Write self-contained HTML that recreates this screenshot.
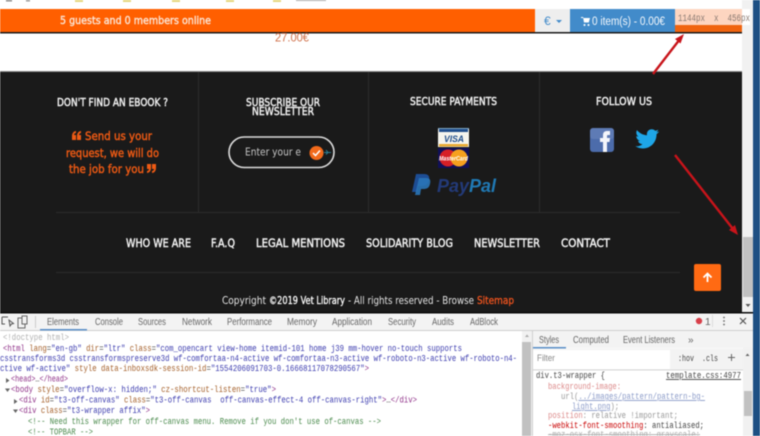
<!DOCTYPE html>
<html lang="en">
<head>
<meta charset="utf-8">
<title>Vet Library</title>
<style>
html,body{margin:0;padding:0;width:760px;height:436px;overflow:hidden;background:#fff}
svg{display:block;filter:blur(.45px)}
text{white-space:pre}
.s{font-family:"Liberation Sans",sans-serif}
.d{font-family:"DejaVu Sans",sans-serif}
.h{font-family:"DejaVu Sans",sans-serif;fill:#f1f1f1;stroke:#f1f1f1;stroke-width:.45px;font-size:10.5px}
.q{font-family:"DejaVu Sans",sans-serif;fill:#ee5a14;stroke:#ee5a14;stroke-width:.45px;font-size:11.5px}
.m{font-family:"DejaVu Sans",sans-serif;fill:#f3f3f3;stroke:#f3f3f3;stroke-width:.45px;font-size:11.5px}
.c{font-family:"DejaVu Sans",sans-serif;fill:#e4e4e4;font-size:10.5px}
.t{font-family:"Liberation Sans",sans-serif;fill:#666;font-size:10px}
.k{font-family:"Liberation Mono",monospace;font-size:9px;fill:#444}
.g{fill:#8f3088}.n{fill:#a5602a}.v{fill:#3a3aae}.x{fill:#b0b0b0}.u{fill:#4a8a4c}
</style>
</head>
<body>
<svg width="760" height="436" viewBox="0 0 760 436" xmlns="http://www.w3.org/2000/svg">
<rect width="760" height="436" fill="#fff"/>
<g fill="#e6d77c">
<rect x="75" y="0" width="8" height="2"/><rect x="123" y="0" width="8" height="2"/><rect x="172" y="0" width="8" height="2"/><rect x="226" y="0" width="8" height="2"/><rect x="273" y="0" width="8" height="2"/>
</g>
<rect x="6" y="0" width="6" height="1.500" fill="#888"/><rect x="26" y="0" width="4" height="1.500" fill="#999"/><rect x="296" y="0" width="30" height="1" fill="#aaa"/>

<rect x="742" y="0" width="11" height="312" fill="#f1f1f1"/>
<rect x="753" y="0" width="7" height="436" fill="#1d4f83"/>
<rect x="743" y="237" width="10" height="60" fill="#c1c1c1"/>
<path d="M745.500 304h5l-2.500 3z" fill="#555"/>

<rect x="0" y="9" width="742" height="23" fill="#ff5f00"/>
<rect x="0" y="32" width="742" height="1.500" fill="#1a1a1a"/>
<text class="d" x="60" y="24" font-size="10.500" fill="#fbe3d2" stroke="#fbe3d2" stroke-width=".4" textLength="151" lengthAdjust="spacingAndGlyphs">5 guests and 0 members online</text>
<rect x="535" y="9" width="35" height="23" fill="#eeeeee"/>
<text class="s" x="544" y="25" font-size="12" fill="#428bca">€</text>
<path d="M556 20h6l-3 3z" fill="#428bca"/>
<rect x="570" y="9" width="105" height="23" fill="#428bca"/>
<path d="M581 17h2l.6 1h6.400l-1.200 4.500h-4.800l-.8-4.500h-2.200zM584.500 24a1 1 0 1 0 .01 0M588.500 24a1 1 0 1 0 .01 0" fill="#fff"/>
<text class="s" x="592" y="25" font-size="11.500" fill="#f4f8fc" textLength="73" lengthAdjust="spacingAndGlyphs">0 item(s) - 0.00€</text>
<rect x="675" y="9" width="67" height="16" fill="#fdd5c0"/>
<rect x="675" y="25" width="67" height="7" fill="#f0640f"/>
<rect x="742" y="9" width="8" height="16" fill="#fff"/>
<text x="678" y="21" font-family="Liberation Mono,monospace" font-size="10" fill="#8a7a72" textLength="72" lengthAdjust="spacingAndGlyphs">1144px  x  456px</text>

<text class="s" x="275" y="41.500" font-size="11.500" fill="#d0714a" textLength="34" lengthAdjust="spacingAndGlyphs">27.00€</text>

<rect x="0" y="71" width="742" height="241" fill="#1a1a1a"/>
<rect x="0" y="71" width="742" height="1" fill="#8a8a8a"/>
<g fill="#2c2c2c">
<rect x="198" y="72" width="1" height="140"/><rect x="368" y="72" width="1" height="140"/><rect x="539" y="72" width="1" height="140"/>
<rect x="56" y="212" width="624" height="1"/><rect x="56" y="272" width="624" height="1"/>
</g>

<text class="h" x="57" y="106" textLength="111" lengthAdjust="spacingAndGlyphs">DON'T FIND AN EBOOK ?</text>
<text class="h" x="246" y="106" textLength="74" lengthAdjust="spacingAndGlyphs">SUBSCRIBE OUR</text>
<text class="h" x="252" y="115" textLength="62" lengthAdjust="spacingAndGlyphs">NEWSLETTER</text>
<text class="h" x="410" y="105" textLength="87" lengthAdjust="spacingAndGlyphs">SECURE PAYMENTS</text>
<text class="h" x="596" y="105" textLength="56" lengthAdjust="spacingAndGlyphs">FOLLOW US</text>

<path d="M72 140v-4c0-3 2-5 4-5v2c-1 0-2 1-2 2h2v5zM77 140v-4c0-3 2-5 4-5v2c-1 0-2 1-2 2h2v5z" fill="#ee5a14"/>
<text class="q" x="85" y="140" textLength="67" lengthAdjust="spacingAndGlyphs">Send us your</text>
<text class="q" x="66" y="157" textLength="93" lengthAdjust="spacingAndGlyphs">request, we will do</text>
<text class="q" x="69" y="173" textLength="75" lengthAdjust="spacingAndGlyphs">the job for you</text>
<path d="M156 164v4c0 3-2 5-4 5v-2c1 0 2-1 2-2h-2v-5zM151 164v4c0 3-2 5-4 5v-2c1 0 2-1 2-2h-2v-5z" fill="#ee5a14"/>

<rect x="229" y="137" width="105" height="30.500" rx="15.250" fill="none" stroke="#dcdcdc" stroke-width="1.600"/>
<text class="d" x="245" y="155.500" font-size="11" fill="#c4c4c4" textLength="56" lengthAdjust="spacingAndGlyphs">Enter your e</text>
<path d="M324 152.500h7M326 150l2 2.500-2 2" fill="none" stroke="#2b7f94" stroke-width="1"/>
<circle cx="316.500" cy="153" r="7" fill="#f26a1b"/>
<path d="M313 153l2.500 2.500 4.500-5" fill="none" stroke="#fff" stroke-width="1.500"/>

<rect x="438" y="128" width="31" height="19" fill="#f4f4ee"/>
<rect x="438" y="128" width="31" height="1" fill="#7fa8c8"/>
<rect x="439" y="129" width="29" height="3" fill="#1f4e8c"/>
<rect x="439" y="144" width="29" height="2.500" fill="#e8a92e"/>
<text class="s" x="444" y="142" font-size="9" font-weight="bold" font-style="italic" fill="#1f4e8c" textLength="20" lengthAdjust="spacingAndGlyphs">VISA</text>
<rect x="438" y="148" width="31" height="20" fill="#10105a"/>
<circle cx="448" cy="158" r="8.500" fill="#d61f26"/>
<circle cx="459" cy="158" r="8.500" fill="#f6a01e"/>
<text class="s" x="439" y="160.500" font-size="6.500" font-weight="bold" font-style="italic" fill="#fff" textLength="29" lengthAdjust="spacingAndGlyphs">MasterCard</text>

<path d="M416 174h8c4 0 6 2 5 6-1 4-3 6-8 6h-3l-1 6h-5z" fill="#1d4d94"/>
<path d="M419 178h7c4 0 5 2 4 6-1 4-3 5-7 5h-2l-1 6h-5z" fill="#2a76b8" opacity=".9"/>
<text class="s" x="437" y="192" font-size="18" font-weight="bold" font-style="italic" textLength="59" lengthAdjust="spacingAndGlyphs"><tspan fill="#233a78">Pay</tspan><tspan fill="#2079b4">Pal</tspan></text>

<rect x="590" y="128" width="24" height="24" rx="3" fill="#4c6cab"/>
<rect x="590" y="128" width="24" height="11" rx="3" fill="#6a86bd" opacity=".6"/>
<path d="M603 152v-10h-3v-4h3v-3c0-3 2-4 4-4h3v4h-2c-1 0-1 .5-1 1.500v1.500h3l-.5 4h-2.500v10z" fill="#f3f5fa"/>

<path d="M659 131.500c-.9.400-1.800.700-2.800.800 1-.6 1.800-1.600 2.100-2.700-.9.600-2 1-3.100 1.200-.9-1-2.100-1.500-3.500-1.500-2.700 0-4.800 2.200-4.800 4.800 0 .4 0 .7.100 1.100-4-.2-7.600-2.100-10-5.100-.4.700-.7 1.600-.7 2.500 0 1.700.9 3.200 2.200 4-.8 0-1.500-.2-2.200-.6v.1c0 2.300 1.700 4.300 3.900 4.700-.7.200-1.500.2-2.200.1.600 1.900 2.400 3.300 4.500 3.300-1.700 1.300-3.700 2.100-6 2.100h-1.100c2.100 1.400 4.700 2.200 7.400 2.200 8.900 0 13.700-7.300 13.700-13.700v-.6c.9-.7 1.800-1.500 2.500-2.400z" fill="#1ea6e8"/>

<text class="m" x="126" y="247" textLength="65" lengthAdjust="spacingAndGlyphs">WHO WE ARE</text>
<text class="m" x="211" y="247" textLength="24" lengthAdjust="spacingAndGlyphs">F.A.Q</text>
<text class="m" x="256" y="247" textLength="89" lengthAdjust="spacingAndGlyphs">LEGAL MENTIONS</text>
<text class="m" x="366" y="247" textLength="87" lengthAdjust="spacingAndGlyphs">SOLIDARITY BLOG</text>
<text class="m" x="474" y="247" textLength="66" lengthAdjust="spacingAndGlyphs">NEWSLETTER</text>
<text class="m" x="561" y="247" textLength="49" lengthAdjust="spacingAndGlyphs">CONTACT</text>

<text class="c" x="222" y="304" textLength="44" lengthAdjust="spacingAndGlyphs">Copyright</text>
<text class="c" x="269" y="304" style="fill:#fff" stroke="#fff" stroke-width=".3" textLength="76" lengthAdjust="spacingAndGlyphs">©2019 Vet Library</text>
<text class="c" x="348" y="304" textLength="126" lengthAdjust="spacingAndGlyphs">- All rights reserved - Browse</text>
<text class="c" x="477" y="304" style="fill:#f0541e" stroke="#f0541e" stroke-width=".3" textLength="37" lengthAdjust="spacingAndGlyphs">Sitemap</text>

<rect x="694" y="264" width="27" height="27" rx="2" fill="#ff6a13"/>
<path d="M707.500 282v-8M703.500 277.500l4-4 4 4" fill="none" stroke="#fff" stroke-width="1.800"/>

<path d="M653 74L680 39" stroke="#c8141a" stroke-width="2.400" fill="none"/>
<path d="M684 34l-9 5 5.500 4.500z" fill="#c8141a"/>
<path d="M675 155L733 229" stroke="#c8141a" stroke-width="2.400" fill="none"/>
<path d="M738 235l-3-10-6 5z" fill="#c8141a"/>

<rect x="0" y="312" width="753" height="1.500" fill="#0a0a0a"/>
<rect x="0" y="313.500" width="753" height="16.500" fill="#f3f3f3"/>
<rect x="0" y="330" width="753" height="1" fill="#cfcfcf"/>
<rect x="40" y="329" width="47" height="1.500" fill="#5a8fc8"/>
<path d="M2 317h6M2 317v7h3M9 320l1 6 1.500-2 2-.5z" fill="none" stroke="#555" stroke-width="1"/>
<rect x="18" y="318" width="7" height="10" fill="none" stroke="#666" stroke-width="1"/>
<rect x="22" y="316" width="5" height="8" fill="#f3f3f3" stroke="#666" stroke-width="1"/>
<rect x="35" y="316" width="1" height="12" fill="#ccc"/>
<text class="t" x="47" y="325" textLength="32" lengthAdjust="spacingAndGlyphs">Elements</text>
<text class="t" x="95" y="325" textLength="28" lengthAdjust="spacingAndGlyphs">Console</text>
<text class="t" x="138" y="325" textLength="28" lengthAdjust="spacingAndGlyphs">Sources</text>
<text class="t" x="182" y="325" textLength="30" lengthAdjust="spacingAndGlyphs">Network</text>
<text class="t" x="227" y="325" textLength="45" lengthAdjust="spacingAndGlyphs">Performance</text>
<text class="t" x="287" y="325" textLength="30" lengthAdjust="spacingAndGlyphs">Memory</text>
<text class="t" x="332" y="325" textLength="40" lengthAdjust="spacingAndGlyphs">Application</text>
<text class="t" x="388" y="325" textLength="28" lengthAdjust="spacingAndGlyphs">Security</text>
<text class="t" x="432" y="325" textLength="22" lengthAdjust="spacingAndGlyphs">Audits</text>
<text class="t" x="470" y="325" textLength="28" lengthAdjust="spacingAndGlyphs">AdBlock</text>
<circle cx="699" cy="321" r="3.200" fill="#d8404a"/>
<text class="t" x="705" y="325" textLength="4">1</text>
<rect x="712" y="315" width="1" height="12" fill="#ddd"/>
<g fill="#666"><circle cx="724" cy="317.500" r=".9"/><circle cx="724" cy="321" r=".9"/><circle cx="724" cy="324.500" r=".9"/></g>
<path d="M740 318l6 6M746 318l-6 6" stroke="#555" stroke-width="1.200"/>

<rect x="522" y="331" width="10" height="105" fill="#f1f1f1"/>
<rect x="522" y="342" width="9" height="94" fill="#c1c1c1"/>
<path d="M525 337h4l-2-2.500z" fill="#aaa"/>
<rect x="532" y="331" width="1" height="105" fill="#cfcfcf"/>

<text class="k x" x="3" y="340" textLength="66" lengthAdjust="spacingAndGlyphs">&lt;!doctype html&gt;</text>
<text class="k" x="3" y="351" textLength="459" lengthAdjust="spacingAndGlyphs"><tspan class="g">&lt;html</tspan> <tspan class="n">lang</tspan>=<tspan class="v">"en-gb"</tspan> <tspan class="n">dir</tspan>=<tspan class="v">"ltr"</tspan> <tspan class="n">class</tspan>=<tspan class="v">"com_opencart view-home itemid-101 home j39 mm-hover no-touch supports</tspan></text>
<text class="k v" x="0" y="361" textLength="517" lengthAdjust="spacingAndGlyphs">csstransforms3d csstransformspreserve3d wf-comfortaa-n4-active wf-comfortaa-n3-active wf-roboto-n3-active wf-roboto-n4-</text>
<text class="k" x="0" y="371" textLength="369" lengthAdjust="spacingAndGlyphs"><tspan class="v">ctive wf-active"</tspan> <tspan class="n">style data-inboxsdk-session-id</tspan>=<tspan class="v">"1554206091703-0.16668117078290567"</tspan><tspan class="g">&gt;</tspan></text>
<path d="M6 378l3.500 2.500-3.500 2.500z" fill="#666"/>
<text class="k" x="11" y="381.500" textLength="57" lengthAdjust="spacingAndGlyphs"><tspan class="g">&lt;head&gt;</tspan>…<tspan class="g">&lt;/head&gt;</tspan></text>
<path d="M5 388.500h5l-2.500 3.500z" fill="#666"/>
<text class="k" x="11" y="392" textLength="265" lengthAdjust="spacingAndGlyphs"><tspan class="g">&lt;body</tspan> <tspan class="n">style</tspan>=<tspan class="v">"overflow-x: hidden;"</tspan> <tspan class="n">cz-shortcut-listen</tspan>=<tspan class="v">"true"</tspan><tspan class="g">&gt;</tspan></text>
<path d="M14 399l3.500 2.500-3.500 2.500z" fill="#666"/>
<text class="k" x="19" y="402.500" textLength="398" lengthAdjust="spacingAndGlyphs"><tspan class="g">&lt;div</tspan> <tspan class="n">id</tspan>=<tspan class="v">"t3-off-canvas"</tspan> <tspan class="n">class</tspan>=<tspan class="v">"t3-off-canvas  off-canvas-effect-4 off-canvas-right"</tspan><tspan class="g">&gt;</tspan>…<tspan class="g">&lt;/div&gt;</tspan></text>
<path d="M13 409.500h5l-2.500 3.500z" fill="#666"/>
<text class="k" x="19" y="413" textLength="131" lengthAdjust="spacingAndGlyphs"><tspan class="g">&lt;div</tspan> <tspan class="n">class</tspan>=<tspan class="v">"t3-wrapper affix"</tspan><tspan class="g">&gt;</tspan></text>
<text class="k u" x="28" y="424" textLength="353" lengthAdjust="spacingAndGlyphs">&lt;!-- Need this wrapper for off-canvas menu. Remove if you don't use of-canvas --&gt;</text>
<text class="k u" x="28" y="434.500" textLength="65" lengthAdjust="spacingAndGlyphs">&lt;!-- TOPBAR --&gt;</text>

<rect x="533" y="331" width="220" height="17" fill="#f3f3f3"/>
<rect x="533" y="347" width="33" height="1.500" fill="#5a8fc8"/>
<text class="t" x="539" y="343" textLength="20" lengthAdjust="spacingAndGlyphs">Styles</text>
<text class="t" x="573" y="343" textLength="36" lengthAdjust="spacingAndGlyphs">Computed</text>
<text class="t" x="623" y="343" textLength="52" lengthAdjust="spacingAndGlyphs">Event Listeners</text>
<text class="t" x="688" y="343">»</text>
<rect x="533" y="348.500" width="220" height="21" fill="#f3f3f3"/>
<rect x="533" y="350" width="137" height="19" fill="#fff"/>
<text class="s" x="537" y="361" font-size="9.500" fill="#888" textLength="18" lengthAdjust="spacingAndGlyphs">Filter</text>
<text class="k" x="678" y="361" textLength="16" lengthAdjust="spacingAndGlyphs">:hov</text>
<text class="k" x="702" y="361" textLength="16" lengthAdjust="spacingAndGlyphs">.cls</text>
<path d="M728 357.500h7M731.500 354v7" stroke="#666" stroke-width="1"/>
<rect x="533" y="369.500" width="220" height="1" fill="#d6d6d6"/>
<rect x="743" y="348" width="10" height="88" fill="#f1f1f1"/>
<rect x="744" y="391" width="8" height="25" fill="#c1c1c1"/>
<path d="M745.500 356h4l-2-2.500z" fill="#666"/>

<text class="k" x="536" y="378" textLength="69" lengthAdjust="spacingAndGlyphs">div.t3-wrapper {</text>
<text class="k" x="666" y="378" text-decoration="underline" textLength="75" lengthAdjust="spacingAndGlyphs">template.css:4977</text>
<text class="k" x="548" y="389" style="fill:#dc8a8a" textLength="73" lengthAdjust="spacingAndGlyphs">background-image:</text>
<text class="k" x="561" y="399" style="fill:#999" textLength="144" lengthAdjust="spacingAndGlyphs">url(<tspan fill="#8a9ac8" text-decoration="underline">../images/pattern/pattern-bg-</tspan></text>
<text class="k" x="572" y="409" style="fill:#999" textLength="47" lengthAdjust="spacingAndGlyphs"><tspan fill="#8a9ac8" text-decoration="underline">light.png</tspan>);</text>
<text class="k" x="548" y="418" style="fill:#999" textLength="130" lengthAdjust="spacingAndGlyphs"><tspan fill="#dc8a8a">position</tspan>: relative !important;</text>
<text class="k" x="548" y="428" textLength="156" lengthAdjust="spacingAndGlyphs"><tspan fill="#c80000">-webkit-font-smoothing</tspan>: antialiased;</text>
<text class="k" x="548" y="437" style="fill:#aaa" text-decoration="line-through" textLength="152" lengthAdjust="spacingAndGlyphs">-moz-osx-font-smoothing: grayscale;</text>
</svg>
</body>
</html>
